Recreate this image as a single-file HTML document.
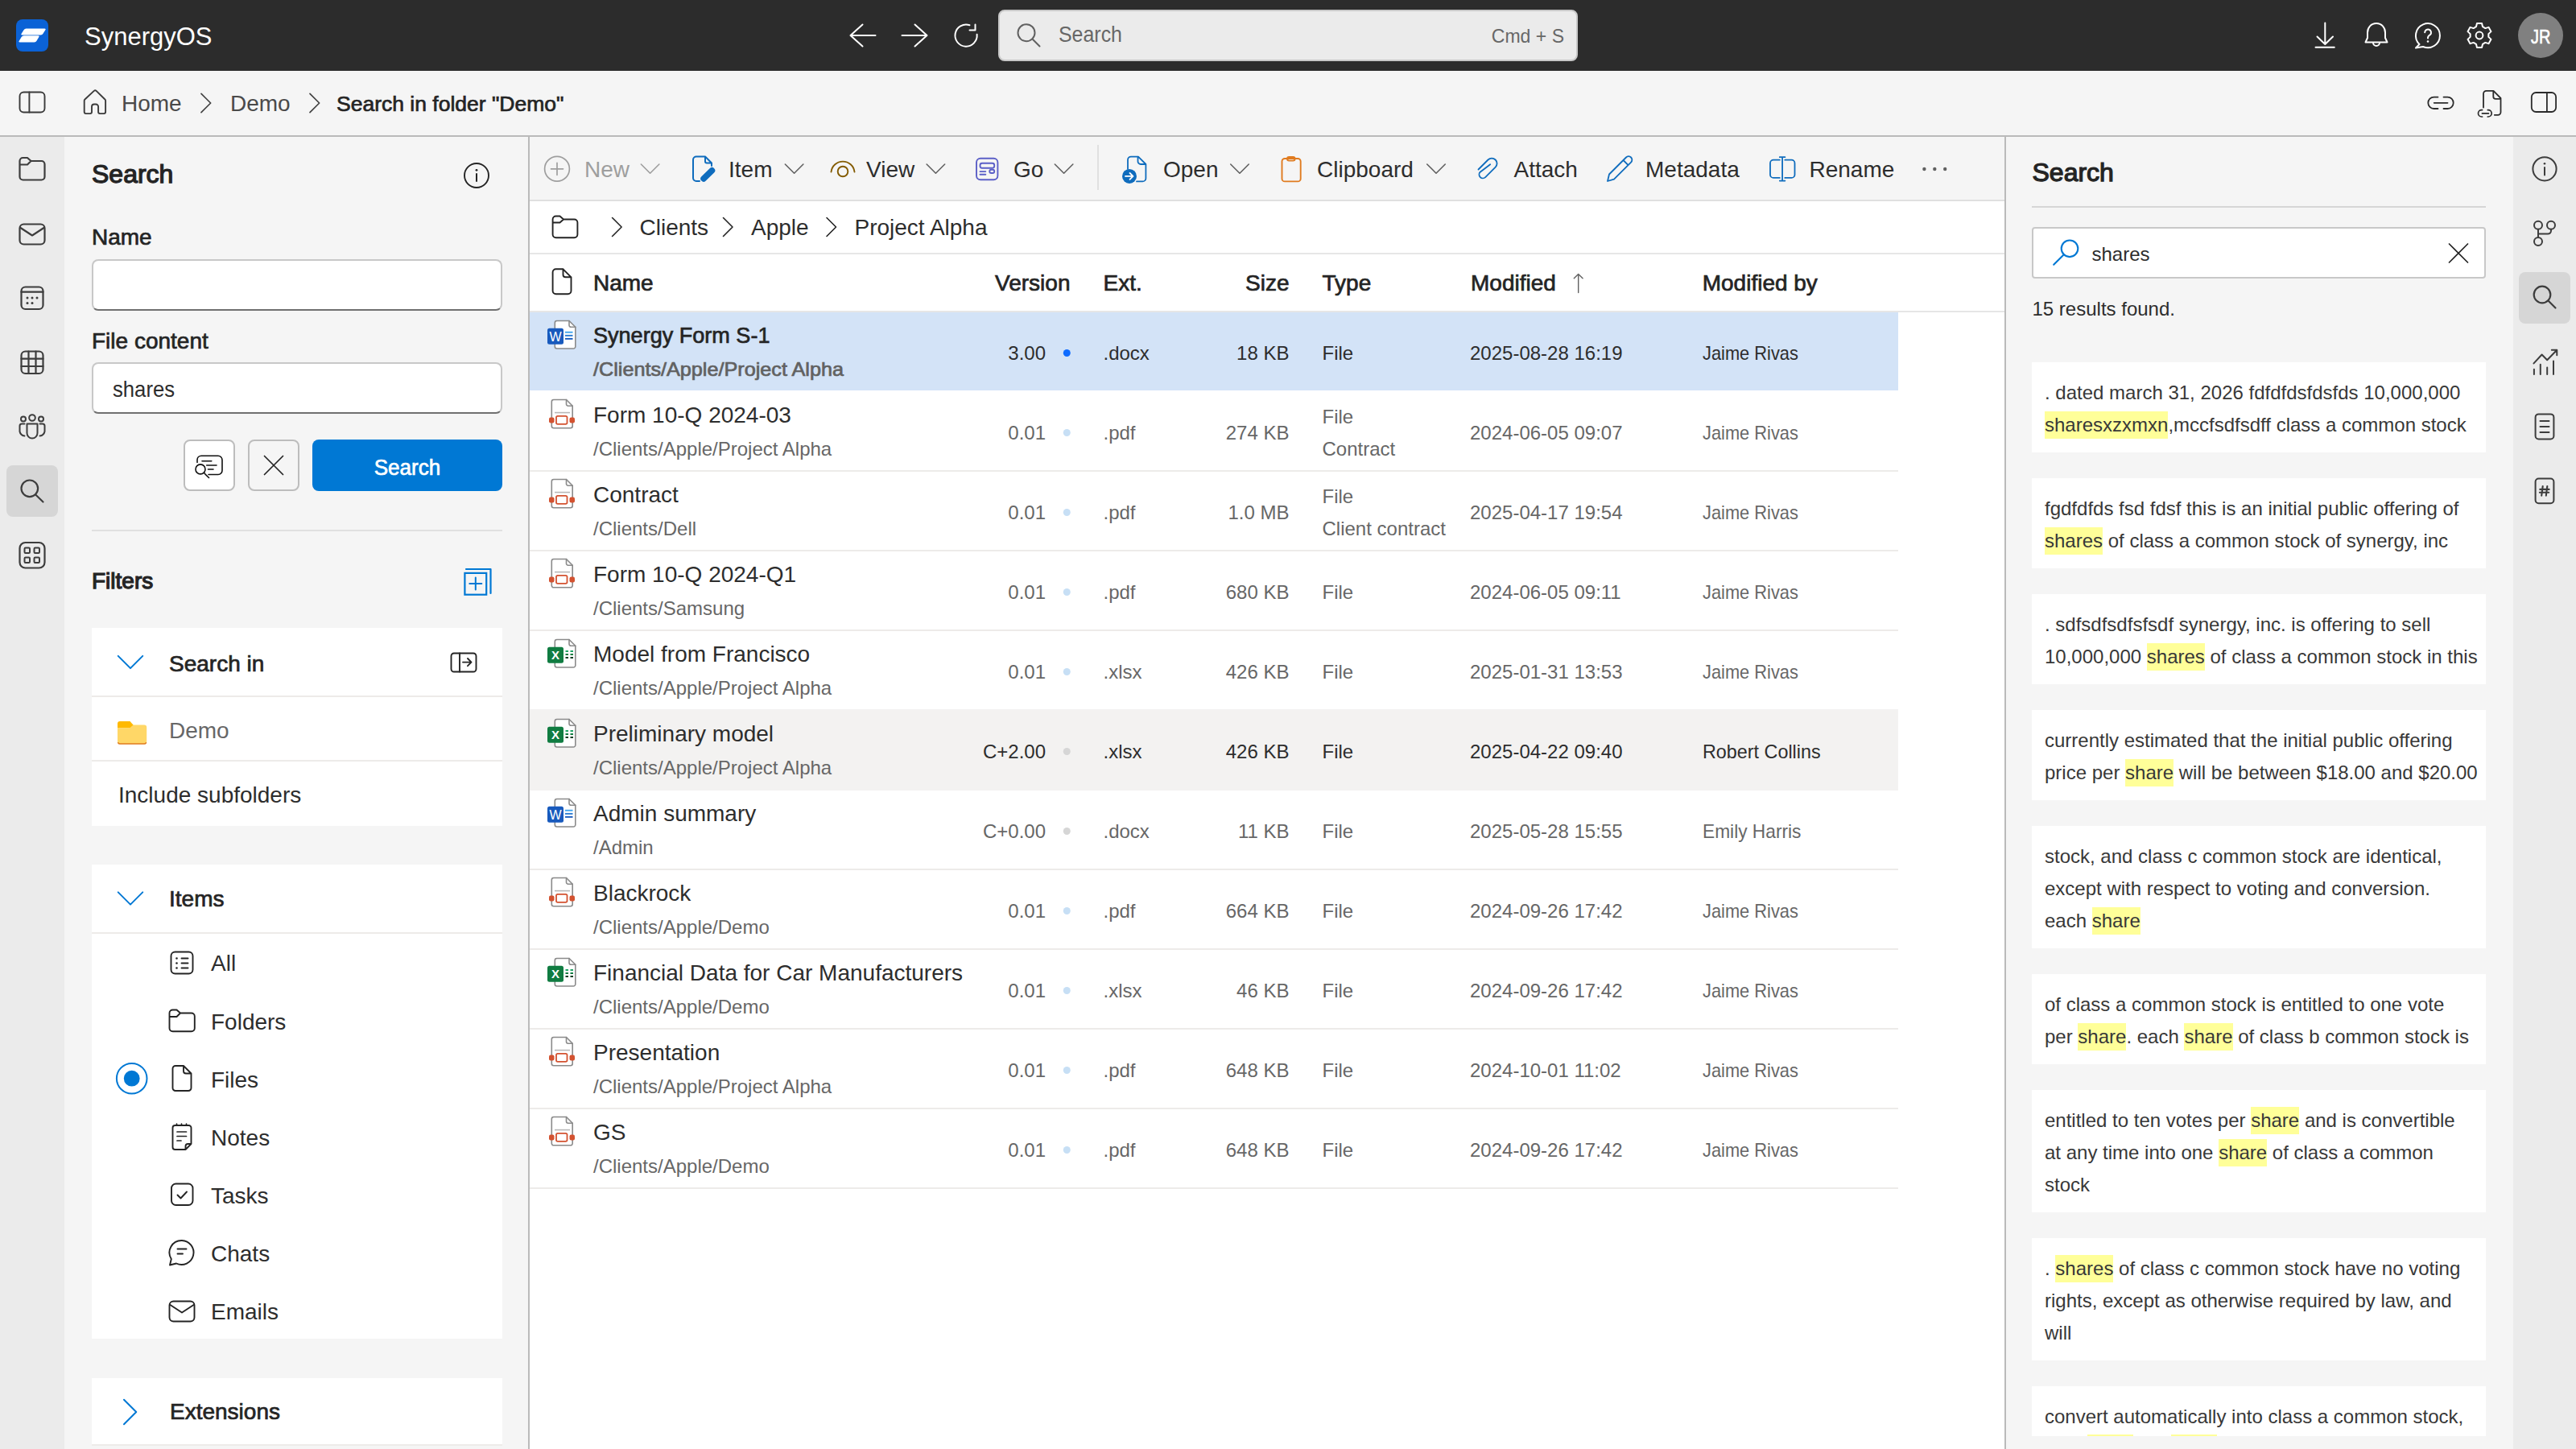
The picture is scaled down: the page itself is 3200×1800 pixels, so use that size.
<!DOCTYPE html>
<html><head><meta charset="utf-8"><title>SynergyOS</title>
<style>
*{box-sizing:border-box;margin:0;padding:0}
html,body{width:3200px;height:1800px;overflow:hidden;background:#fff;font-family:"Liberation Sans",sans-serif;color:#242424}
.a{position:absolute}
.t{position:absolute;white-space:nowrap;line-height:1}
.hl{background:#ffff99;padding:3px 0 4px}
</style></head><body>
<div class="a" style="left:0px;top:0px;width:3200px;height:88px;background:#2c2c2c;"></div>
<div class="a" style="left:20px;top:24px;width:40px;height:40px;background:#0b62d6;border-radius:8px"></div>
<div class="t" style="left:105px;top:30.25px;font-size:31px;color:#fff;font-weight:400;">SynergyOS</div>
<div class="a" style="left:1240px;top:12px;width:720px;height:64px;background:#ebebeb;border:2px solid #c8c8c8;border-radius:8px"></div>
<div class="t" style="left:1315px;top:29.29px;font-size:28px;color:#676767;font-weight:400;transform:scaleX(0.89);transform-origin:left center;">Search</div>
<div class="t" style="right:1256.5px;top:32.68px;font-size:24px;color:#676767;font-weight:400;text-align:right;transform:scaleX(0.96);transform-origin:right center;">Cmd + S</div>
<div class="a" style="left:3128px;top:16px;width:56px;height:56px;background:#808080;border-radius:50%"></div>
<div class="t" style="left:3143.5px;top:33.68px;font-size:24px;color:#fff;font-weight:400;-webkit-text-stroke:0.7px #fff;transform:scaleX(0.83);transform-origin:left center;">JR</div>
<div class="a" style="left:0px;top:88px;width:3200px;height:80px;background:#f5f5f5;"></div>
<div class="a" style="left:0px;top:168px;width:3200px;height:2px;background:#bababa;"></div>
<div class="t" style="left:151px;top:115.09px;font-size:28px;color:#4a4a4a;font-weight:400;">Home</div>
<div class="t" style="left:286px;top:115.09px;font-size:28px;color:#4a4a4a;font-weight:400;">Demo</div>
<div class="t" style="left:418px;top:116.36px;font-size:26.5px;color:#242424;font-weight:400;-webkit-text-stroke:0.7px #242424;">Search in folder "Demo"</div>
<div class="a" style="left:0px;top:170px;width:80px;height:1630px;background:#ebebeb;"></div>
<div class="a" style="left:80px;top:170px;width:576px;height:1630px;background:#f5f5f5;"></div>
<div class="a" style="left:656px;top:170px;width:2px;height:1630px;background:#bababa;"></div>
<div class="a" style="left:658px;top:170px;width:1832px;height:1630px;background:#ffffff;"></div>
<div class="a" style="left:2490px;top:170px;width:2px;height:1630px;background:#bababa;"></div>
<div class="a" style="left:2492px;top:170px;width:630px;height:1630px;background:#f5f5f5;"></div>
<div class="a" style="left:3122px;top:170px;width:78px;height:1630px;background:#ebebeb;"></div>
<div class="a" style="left:8px;top:578px;width:64px;height:64px;background:#d6d6d6;border-radius:8px"></div>
<div class="a" style="left:3129px;top:338px;width:64px;height:64px;background:#d6d6d6;border-radius:8px"></div>
<div class="t" style="left:114px;top:200.41px;font-size:32px;color:#242424;font-weight:400;-webkit-text-stroke:1.25px #242424;">Search</div>
<div class="t" style="left:114px;top:281.49px;font-size:28px;color:#242424;font-weight:400;-webkit-text-stroke:0.7px #242424;">Name</div>
<div class="a" style="left:114px;top:322px;width:510px;height:64px;background:#fff;border:2px solid #c8c8c8;border-bottom-color:#707070;border-radius:8px"></div>
<div class="t" style="left:114px;top:410.29px;font-size:28px;color:#242424;font-weight:400;-webkit-text-stroke:0.7px #242424;">File content</div>
<div class="a" style="left:114px;top:450px;width:510px;height:64px;background:#fff;border:2px solid #c8c8c8;border-bottom-color:#707070;border-radius:8px"></div>
<div class="t" style="left:140px;top:469.59px;font-size:28px;color:#2d2d2d;font-weight:400;transform:scaleX(0.917);transform-origin:left center;">shares</div>
<div class="a" style="left:228px;top:546px;width:64px;height:64px;background:#fff;border:2px solid #bdbdbd;border-radius:8px"></div>
<div class="a" style="left:308px;top:546px;width:64px;height:64px;background:#f5f5f5;border:2px solid #bdbdbd;border-radius:8px"></div>
<div class="a" style="left:388px;top:546px;width:236px;height:64px;background:#0078d4;border-radius:8px"></div>
<div class="t" style="left:388px;width:236px;top:566.89px;text-align:center;font-size:28px;font-weight:400;-webkit-text-stroke:0.7px #fff;color:#fff;transform:scaleX(0.93)">Search</div>
<div class="a" style="left:114px;top:658px;width:510px;height:2px;background:#e0e0e0;"></div>
<div class="t" style="left:114px;top:707.69px;font-size:28px;color:#242424;font-weight:400;-webkit-text-stroke:1.25px #242424;">Filters</div>
<div class="a" style="left:114px;top:780px;width:510px;height:246px;background:#fff;"></div>
<div class="a" style="left:114px;top:864px;width:510px;height:2px;background:#edebe9;"></div>
<div class="a" style="left:114px;top:944px;width:510px;height:2px;background:#edebe9;"></div>
<div class="t" style="left:210px;top:810.69px;font-size:28px;color:#242424;font-weight:400;-webkit-text-stroke:0.7px #242424;">Search in</div>
<div class="t" style="left:210px;top:894.29px;font-size:28px;color:#676767;font-weight:400;">Demo</div>
<div class="t" style="left:147px;top:973.79px;font-size:28px;color:#2d2d2d;font-weight:400;">Include subfolders</div>
<div class="a" style="left:114px;top:1074px;width:510px;height:589px;background:#fff;"></div>
<div class="a" style="left:114px;top:1158px;width:510px;height:2px;background:#edebe9;"></div>
<div class="t" style="left:210px;top:1103.29px;font-size:28px;color:#242424;font-weight:400;-webkit-text-stroke:0.7px #242424;">Items</div>
<div class="t" style="left:262px;top:1183.29px;font-size:28px;color:#2d2d2d;font-weight:400;">All</div>
<div class="t" style="left:262px;top:1255.79px;font-size:28px;color:#2d2d2d;font-weight:400;">Folders</div>
<div class="t" style="left:262px;top:1328.09px;font-size:28px;color:#2d2d2d;font-weight:400;">Files</div>
<div class="t" style="left:262px;top:1400.29px;font-size:28px;color:#2d2d2d;font-weight:400;">Notes</div>
<div class="t" style="left:262px;top:1472.29px;font-size:28px;color:#2d2d2d;font-weight:400;">Tasks</div>
<div class="t" style="left:262px;top:1544.29px;font-size:28px;color:#2d2d2d;font-weight:400;">Chats</div>
<div class="t" style="left:262px;top:1616.29px;font-size:28px;color:#2d2d2d;font-weight:400;">Emails</div>
<div class="a" style="left:114px;top:1712px;width:510px;height:82px;background:#fff;"></div>
<div class="a" style="left:114px;top:1794px;width:510px;height:2px;background:#edebe9;"></div>
<div class="t" style="left:211px;top:1740.29px;font-size:28px;color:#242424;font-weight:400;-webkit-text-stroke:0.7px #242424;">Extensions</div>
<div class="a" style="left:658px;top:170px;width:1832px;height:78px;background:#f5f5f5;"></div>
<div class="a" style="left:658px;top:248px;width:1832px;height:2px;background:#e0e0e0;"></div>
<div class="a" style="left:658px;top:314px;width:1832px;height:2px;background:#e6e6e6;"></div>
<div class="a" style="left:658px;top:386px;width:1832px;height:2px;background:#e6e6e6;"></div>
<div class="t" style="left:726px;top:196.99px;font-size:28px;color:#9e9e9e;font-weight:400;">New</div>
<div class="t" style="left:905px;top:196.99px;font-size:28px;color:#2d2d2d;font-weight:400;">Item</div>
<div class="t" style="left:1076px;top:196.99px;font-size:28px;color:#2d2d2d;font-weight:400;">View</div>
<div class="t" style="left:1259px;top:196.99px;font-size:28px;color:#2d2d2d;font-weight:400;">Go</div>
<div class="a" style="left:1363px;top:180px;width:2px;height:56px;background:#e0e0e0;"></div>
<div class="t" style="left:1445px;top:197.19px;font-size:28px;color:#2d2d2d;font-weight:400;">Open</div>
<div class="t" style="left:1636px;top:197.19px;font-size:28px;color:#2d2d2d;font-weight:400;">Clipboard</div>
<div class="t" style="left:1880.5px;top:197.19px;font-size:28px;color:#2d2d2d;font-weight:400;">Attach</div>
<div class="t" style="left:2044px;top:197.19px;font-size:28px;color:#2d2d2d;font-weight:400;">Metadata</div>
<div class="t" style="left:2247.5px;top:197.19px;font-size:28px;color:#2d2d2d;font-weight:400;">Rename</div>
<div class="t" style="left:794.5px;top:269.29px;font-size:28px;color:#2d2d2d;font-weight:400;">Clients</div>
<div class="t" style="left:933px;top:269.29px;font-size:28px;color:#2d2d2d;font-weight:400;">Apple</div>
<div class="t" style="left:1061.5px;top:269.29px;font-size:28px;color:#2d2d2d;font-weight:400;">Project Alpha</div>
<div class="t" style="left:737px;top:338.19px;font-size:28px;color:#242424;font-weight:400;-webkit-text-stroke:0.7px #242424;">Name</div>
<div class="t" style="right:1870.5px;top:338.19px;font-size:28px;color:#242424;font-weight:400;text-align:right;-webkit-text-stroke:0.7px #242424;">Version</div>
<div class="t" style="left:1370.5px;top:338.19px;font-size:28px;color:#242424;font-weight:400;-webkit-text-stroke:0.7px #242424;">Ext.</div>
<div class="t" style="right:1598.5px;top:338.19px;font-size:28px;color:#242424;font-weight:400;text-align:right;-webkit-text-stroke:0.7px #242424;">Size</div>
<div class="t" style="left:1642.5px;top:338.19px;font-size:28px;color:#242424;font-weight:400;-webkit-text-stroke:0.7px #242424;">Type</div>
<div class="t" style="left:1827px;top:338.19px;font-size:28px;color:#242424;font-weight:400;-webkit-text-stroke:0.7px #242424;">Modified</div>
<div class="t" style="left:2114.7px;top:338.19px;font-size:28px;color:#242424;font-weight:400;-webkit-text-stroke:0.7px #242424;">Modified by</div>
<div class="a" style="left:658px;top:388px;width:1700px;height:97px;background:#d3e3f7;"></div>
<div class="t" style="left:737px;top:403.29px;font-size:28px;color:#242424;font-weight:400;-webkit-text-stroke:0.7px #242424;transform:scaleX(0.966);transform-origin:left center;">Synergy Form S-1</div>
<div class="t" style="left:737px;top:446.68px;font-size:24px;color:#616161;font-weight:400;-webkit-text-stroke:0.7px #616161;transform:scaleX(1.05);transform-origin:left center;">/Clients/Apple/Project Alpha</div>
<div class="t" style="right:1901px;top:426.68px;font-size:24px;color:#2d2d2d;font-weight:400;text-align:right;">3.00</div>
<div class="t" style="left:1370.5px;top:426.68px;font-size:24px;color:#2d2d2d;font-weight:400;">.docx</div>
<div class="t" style="right:1598.5px;top:426.68px;font-size:24px;color:#2d2d2d;font-weight:400;text-align:right;">18 KB</div>
<div class="t" style="left:1642.5px;top:426.68px;font-size:24px;color:#2d2d2d;font-weight:400;">File</div>
<div class="t" style="left:1826px;top:426.68px;font-size:24px;color:#2d2d2d;font-weight:400;">2025-08-28 16:19</div>
<div class="t" style="left:2114.5px;top:426.68px;font-size:24px;color:#2d2d2d;font-weight:400;transform:scaleX(0.91);transform-origin:left center;">Jaime Rivas</div>
<div class="a" style="left:658px;top:584px;width:1700px;height:2px;background:#edebe9;"></div>
<div class="t" style="left:737px;top:502.29px;font-size:28px;color:#2d2d2d;font-weight:400;">Form 10-Q 2024-03</div>
<div class="t" style="left:737px;top:545.68px;font-size:24px;color:#676767;font-weight:400;">/Clients/Apple/Project Alpha</div>
<div class="t" style="right:1901px;top:525.68px;font-size:24px;color:#676767;font-weight:400;text-align:right;">0.01</div>
<div class="t" style="left:1370.5px;top:525.68px;font-size:24px;color:#676767;font-weight:400;">.pdf</div>
<div class="t" style="right:1598.5px;top:525.68px;font-size:24px;color:#676767;font-weight:400;text-align:right;">274 KB</div>
<div class="t" style="left:1642.5px;top:505.68px;font-size:24px;color:#676767;font-weight:400;">File</div>
<div class="t" style="left:1642.5px;top:545.68px;font-size:24px;color:#676767;font-weight:400;">Contract</div>
<div class="t" style="left:1826px;top:525.68px;font-size:24px;color:#676767;font-weight:400;">2024-06-05 09:07</div>
<div class="t" style="left:2114.5px;top:525.68px;font-size:24px;color:#676767;font-weight:400;transform:scaleX(0.91);transform-origin:left center;">Jaime Rivas</div>
<div class="a" style="left:658px;top:683px;width:1700px;height:2px;background:#edebe9;"></div>
<div class="t" style="left:737px;top:601.29px;font-size:28px;color:#2d2d2d;font-weight:400;">Contract</div>
<div class="t" style="left:737px;top:644.68px;font-size:24px;color:#676767;font-weight:400;">/Clients/Dell</div>
<div class="t" style="right:1901px;top:624.68px;font-size:24px;color:#676767;font-weight:400;text-align:right;">0.01</div>
<div class="t" style="left:1370.5px;top:624.68px;font-size:24px;color:#676767;font-weight:400;">.pdf</div>
<div class="t" style="right:1598.5px;top:624.68px;font-size:24px;color:#676767;font-weight:400;text-align:right;">1.0 MB</div>
<div class="t" style="left:1642.5px;top:604.68px;font-size:24px;color:#676767;font-weight:400;">File</div>
<div class="t" style="left:1642.5px;top:644.68px;font-size:24px;color:#676767;font-weight:400;">Client contract</div>
<div class="t" style="left:1826px;top:624.68px;font-size:24px;color:#676767;font-weight:400;">2025-04-17 19:54</div>
<div class="t" style="left:2114.5px;top:624.68px;font-size:24px;color:#676767;font-weight:400;transform:scaleX(0.91);transform-origin:left center;">Jaime Rivas</div>
<div class="a" style="left:658px;top:782px;width:1700px;height:2px;background:#edebe9;"></div>
<div class="t" style="left:737px;top:700.29px;font-size:28px;color:#2d2d2d;font-weight:400;">Form 10-Q 2024-Q1</div>
<div class="t" style="left:737px;top:743.68px;font-size:24px;color:#676767;font-weight:400;">/Clients/Samsung</div>
<div class="t" style="right:1901px;top:723.68px;font-size:24px;color:#676767;font-weight:400;text-align:right;">0.01</div>
<div class="t" style="left:1370.5px;top:723.68px;font-size:24px;color:#676767;font-weight:400;">.pdf</div>
<div class="t" style="right:1598.5px;top:723.68px;font-size:24px;color:#676767;font-weight:400;text-align:right;">680 KB</div>
<div class="t" style="left:1642.5px;top:723.68px;font-size:24px;color:#676767;font-weight:400;">File</div>
<div class="t" style="left:1826px;top:723.68px;font-size:24px;color:#676767;font-weight:400;">2024-06-05 09:11</div>
<div class="t" style="left:2114.5px;top:723.68px;font-size:24px;color:#676767;font-weight:400;transform:scaleX(0.91);transform-origin:left center;">Jaime Rivas</div>
<div class="a" style="left:658px;top:881px;width:1700px;height:2px;background:#edebe9;"></div>
<div class="t" style="left:737px;top:799.29px;font-size:28px;color:#2d2d2d;font-weight:400;">Model from Francisco</div>
<div class="t" style="left:737px;top:842.68px;font-size:24px;color:#676767;font-weight:400;">/Clients/Apple/Project Alpha</div>
<div class="t" style="right:1901px;top:822.68px;font-size:24px;color:#676767;font-weight:400;text-align:right;">0.01</div>
<div class="t" style="left:1370.5px;top:822.68px;font-size:24px;color:#676767;font-weight:400;">.xlsx</div>
<div class="t" style="right:1598.5px;top:822.68px;font-size:24px;color:#676767;font-weight:400;text-align:right;">426 KB</div>
<div class="t" style="left:1642.5px;top:822.68px;font-size:24px;color:#676767;font-weight:400;">File</div>
<div class="t" style="left:1826px;top:822.68px;font-size:24px;color:#676767;font-weight:400;">2025-01-31 13:53</div>
<div class="t" style="left:2114.5px;top:822.68px;font-size:24px;color:#676767;font-weight:400;transform:scaleX(0.91);transform-origin:left center;">Jaime Rivas</div>
<div class="a" style="left:658px;top:881px;width:1700px;height:101px;background:#f3f2f1;"></div>
<div class="t" style="left:737px;top:898.29px;font-size:28px;color:#2d2d2d;font-weight:400;">Preliminary model</div>
<div class="t" style="left:737px;top:941.68px;font-size:24px;color:#676767;font-weight:400;">/Clients/Apple/Project Alpha</div>
<div class="t" style="right:1901px;top:921.68px;font-size:24px;color:#2d2d2d;font-weight:400;text-align:right;">C+2.00</div>
<div class="t" style="left:1370.5px;top:921.68px;font-size:24px;color:#2d2d2d;font-weight:400;">.xlsx</div>
<div class="t" style="right:1598.5px;top:921.68px;font-size:24px;color:#2d2d2d;font-weight:400;text-align:right;">426 KB</div>
<div class="t" style="left:1642.5px;top:921.68px;font-size:24px;color:#2d2d2d;font-weight:400;">File</div>
<div class="t" style="left:1826px;top:921.68px;font-size:24px;color:#2d2d2d;font-weight:400;">2025-04-22 09:40</div>
<div class="t" style="left:2114.5px;top:921.68px;font-size:24px;color:#2d2d2d;font-weight:400;transform:scaleX(0.973);transform-origin:left center;">Robert Collins</div>
<div class="a" style="left:658px;top:1079px;width:1700px;height:2px;background:#edebe9;"></div>
<div class="t" style="left:737px;top:997.29px;font-size:28px;color:#2d2d2d;font-weight:400;">Admin summary</div>
<div class="t" style="left:737px;top:1040.68px;font-size:24px;color:#676767;font-weight:400;">/Admin</div>
<div class="t" style="right:1901px;top:1020.68px;font-size:24px;color:#676767;font-weight:400;text-align:right;">C+0.00</div>
<div class="t" style="left:1370.5px;top:1020.68px;font-size:24px;color:#676767;font-weight:400;">.docx</div>
<div class="t" style="right:1598.5px;top:1020.68px;font-size:24px;color:#676767;font-weight:400;text-align:right;">11 KB</div>
<div class="t" style="left:1642.5px;top:1020.68px;font-size:24px;color:#676767;font-weight:400;">File</div>
<div class="t" style="left:1826px;top:1020.68px;font-size:24px;color:#676767;font-weight:400;">2025-05-28 15:55</div>
<div class="t" style="left:2114.5px;top:1020.68px;font-size:24px;color:#676767;font-weight:400;transform:scaleX(0.947);transform-origin:left center;">Emily Harris</div>
<div class="a" style="left:658px;top:1178px;width:1700px;height:2px;background:#edebe9;"></div>
<div class="t" style="left:737px;top:1096.29px;font-size:28px;color:#2d2d2d;font-weight:400;">Blackrock</div>
<div class="t" style="left:737px;top:1139.68px;font-size:24px;color:#676767;font-weight:400;">/Clients/Apple/Demo</div>
<div class="t" style="right:1901px;top:1119.68px;font-size:24px;color:#676767;font-weight:400;text-align:right;">0.01</div>
<div class="t" style="left:1370.5px;top:1119.68px;font-size:24px;color:#676767;font-weight:400;">.pdf</div>
<div class="t" style="right:1598.5px;top:1119.68px;font-size:24px;color:#676767;font-weight:400;text-align:right;">664 KB</div>
<div class="t" style="left:1642.5px;top:1119.68px;font-size:24px;color:#676767;font-weight:400;">File</div>
<div class="t" style="left:1826px;top:1119.68px;font-size:24px;color:#676767;font-weight:400;">2024-09-26 17:42</div>
<div class="t" style="left:2114.5px;top:1119.68px;font-size:24px;color:#676767;font-weight:400;transform:scaleX(0.91);transform-origin:left center;">Jaime Rivas</div>
<div class="a" style="left:658px;top:1277px;width:1700px;height:2px;background:#edebe9;"></div>
<div class="t" style="left:737px;top:1195.29px;font-size:28px;color:#2d2d2d;font-weight:400;">Financial Data for Car Manufacturers</div>
<div class="t" style="left:737px;top:1238.68px;font-size:24px;color:#676767;font-weight:400;">/Clients/Apple/Demo</div>
<div class="t" style="right:1901px;top:1218.68px;font-size:24px;color:#676767;font-weight:400;text-align:right;">0.01</div>
<div class="t" style="left:1370.5px;top:1218.68px;font-size:24px;color:#676767;font-weight:400;">.xlsx</div>
<div class="t" style="right:1598.5px;top:1218.68px;font-size:24px;color:#676767;font-weight:400;text-align:right;">46 KB</div>
<div class="t" style="left:1642.5px;top:1218.68px;font-size:24px;color:#676767;font-weight:400;">File</div>
<div class="t" style="left:1826px;top:1218.68px;font-size:24px;color:#676767;font-weight:400;">2024-09-26 17:42</div>
<div class="t" style="left:2114.5px;top:1218.68px;font-size:24px;color:#676767;font-weight:400;transform:scaleX(0.91);transform-origin:left center;">Jaime Rivas</div>
<div class="a" style="left:658px;top:1376px;width:1700px;height:2px;background:#edebe9;"></div>
<div class="t" style="left:737px;top:1294.29px;font-size:28px;color:#2d2d2d;font-weight:400;">Presentation</div>
<div class="t" style="left:737px;top:1337.68px;font-size:24px;color:#676767;font-weight:400;">/Clients/Apple/Project Alpha</div>
<div class="t" style="right:1901px;top:1317.68px;font-size:24px;color:#676767;font-weight:400;text-align:right;">0.01</div>
<div class="t" style="left:1370.5px;top:1317.68px;font-size:24px;color:#676767;font-weight:400;">.pdf</div>
<div class="t" style="right:1598.5px;top:1317.68px;font-size:24px;color:#676767;font-weight:400;text-align:right;">648 KB</div>
<div class="t" style="left:1642.5px;top:1317.68px;font-size:24px;color:#676767;font-weight:400;">File</div>
<div class="t" style="left:1826px;top:1317.68px;font-size:24px;color:#676767;font-weight:400;">2024-10-01 11:02</div>
<div class="t" style="left:2114.5px;top:1317.68px;font-size:24px;color:#676767;font-weight:400;transform:scaleX(0.91);transform-origin:left center;">Jaime Rivas</div>
<div class="a" style="left:658px;top:1475px;width:1700px;height:2px;background:#edebe9;"></div>
<div class="t" style="left:737px;top:1393.29px;font-size:28px;color:#2d2d2d;font-weight:400;">GS</div>
<div class="t" style="left:737px;top:1436.68px;font-size:24px;color:#676767;font-weight:400;">/Clients/Apple/Demo</div>
<div class="t" style="right:1901px;top:1416.68px;font-size:24px;color:#676767;font-weight:400;text-align:right;">0.01</div>
<div class="t" style="left:1370.5px;top:1416.68px;font-size:24px;color:#676767;font-weight:400;">.pdf</div>
<div class="t" style="right:1598.5px;top:1416.68px;font-size:24px;color:#676767;font-weight:400;text-align:right;">648 KB</div>
<div class="t" style="left:1642.5px;top:1416.68px;font-size:24px;color:#676767;font-weight:400;">File</div>
<div class="t" style="left:1826px;top:1416.68px;font-size:24px;color:#676767;font-weight:400;">2024-09-26 17:42</div>
<div class="t" style="left:2114.5px;top:1416.68px;font-size:24px;color:#676767;font-weight:400;transform:scaleX(0.91);transform-origin:left center;">Jaime Rivas</div>
<div class="t" style="left:2524.5px;top:198.21px;font-size:32px;color:#242424;font-weight:400;-webkit-text-stroke:1.25px #242424;">Search</div>
<div class="a" style="left:2524px;top:256px;width:564px;height:2px;background:#d6d6d6;"></div>
<div class="a" style="left:2524px;top:282px;width:564px;height:64px;background:#fff;border:2px solid #c8c8c8;border-radius:4px"></div>
<div class="t" style="left:2598.5px;top:303.68px;font-size:24px;color:#2d2d2d;font-weight:400;">shares</div>
<div class="t" style="left:2524.5px;top:371.98px;font-size:24px;color:#2d2d2d;font-weight:400;">15 results found.</div>
<div class="a" style="left:2492px;top:420px;width:630px;height:1364px;overflow:hidden">
<div class="a" style="left:32px;top:30px;width:564px;height:112px;background:#fff;"></div>
<div class="t" style="left:48px;top:55.68px;font-size:24px;color:#383838;font-weight:400;">. dated march 31, 2026 fdfdfdsfdsfds 10,000,000</div>
<div class="t" style="left:48px;top:95.68px;font-size:24px;color:#383838;font-weight:400;"><span class="hl">sharesxzxmxn</span>,mccfsdfsdff class a common stock</div>
<div class="a" style="left:32px;top:174px;width:564px;height:112px;background:#fff;"></div>
<div class="t" style="left:48px;top:199.68px;font-size:24px;color:#383838;font-weight:400;">fgdfdfds fsd fdsf this is an initial public offering of</div>
<div class="t" style="left:48px;top:239.68px;font-size:24px;color:#383838;font-weight:400;"><span class="hl">shares</span> of class a common stock of synergy, inc</div>
<div class="a" style="left:32px;top:318px;width:564px;height:112px;background:#fff;"></div>
<div class="t" style="left:48px;top:343.68px;font-size:24px;color:#383838;font-weight:400;">. sdfsdfsdfsfsdf synergy, inc. is offering to sell</div>
<div class="t" style="left:48px;top:383.68px;font-size:24px;color:#383838;font-weight:400;">10,000,000 <span class="hl">shares</span> of class a common stock in this</div>
<div class="a" style="left:32px;top:462px;width:564px;height:112px;background:#fff;"></div>
<div class="t" style="left:48px;top:487.68px;font-size:24px;color:#383838;font-weight:400;">currently estimated that the initial public offering</div>
<div class="t" style="left:48px;top:527.68px;font-size:24px;color:#383838;font-weight:400;">price per <span class="hl">share</span> will be between $18.00 and $20.00</div>
<div class="a" style="left:32px;top:606px;width:564px;height:152px;background:#fff;"></div>
<div class="t" style="left:48px;top:631.68px;font-size:24px;color:#383838;font-weight:400;">stock, and class c common stock are identical,</div>
<div class="t" style="left:48px;top:671.68px;font-size:24px;color:#383838;font-weight:400;">except with respect to voting and conversion.</div>
<div class="t" style="left:48px;top:711.68px;font-size:24px;color:#383838;font-weight:400;">each <span class="hl">share</span></div>
<div class="a" style="left:32px;top:790px;width:564px;height:112px;background:#fff;"></div>
<div class="t" style="left:48px;top:815.68px;font-size:24px;color:#383838;font-weight:400;">of class a common stock is entitled to one vote</div>
<div class="t" style="left:48px;top:855.68px;font-size:24px;color:#383838;font-weight:400;">per <span class="hl">share</span>. each <span class="hl">share</span> of class b common stock is</div>
<div class="a" style="left:32px;top:934px;width:564px;height:152px;background:#fff;"></div>
<div class="t" style="left:48px;top:959.68px;font-size:24px;color:#383838;font-weight:400;">entitled to ten votes per <span class="hl">share</span> and is convertible</div>
<div class="t" style="left:48px;top:999.68px;font-size:24px;color:#383838;font-weight:400;">at any time into one <span class="hl">share</span> of class a common</div>
<div class="t" style="left:48px;top:1039.68px;font-size:24px;color:#383838;font-weight:400;">stock</div>
<div class="a" style="left:32px;top:1118px;width:564px;height:152px;background:#fff;"></div>
<div class="t" style="left:48px;top:1143.68px;font-size:24px;color:#383838;font-weight:400;">. <span class="hl">shares</span> of class c common stock have no voting</div>
<div class="t" style="left:48px;top:1183.68px;font-size:24px;color:#383838;font-weight:400;">rights, except as otherwise required by law, and</div>
<div class="t" style="left:48px;top:1223.68px;font-size:24px;color:#383838;font-weight:400;">will</div>
<div class="a" style="left:32px;top:1302px;width:564px;height:72px;background:#fff;"></div>
<div class="t" style="left:48px;top:1327.68px;font-size:24px;color:#383838;font-weight:400;">convert automatically into class a common stock,</div>
<div class="a" style="left:101px;top:1362px;width:57px;height:4px;background:#ffff99;"></div>
<div class="a" style="left:205px;top:1362px;width:57px;height:4px;background:#ffff99;"></div>
</div>
<svg class="a" style="left:0;top:0" width="3200" height="1800" viewBox="0 0 3200 1800">
<path d="M32.5 35.4 H55.5 Q57.5 35.4 56.3 37.2 L53.5 41.8 Q52.6 43.5 50.5 43.5 H27.5 Q25.5 43.5 26.7 41.8 L29.5 37.2 Q30.6 35.4 32.5 35.4Z" fill="#fff"/>
<path d="M31.8 44.3 H47.5 Q49.5 44.3 48.3 46.1 L45.5 50.7 Q44.6 52.4 42.6 52.4 H24.6 Q22.6 52.4 23.8 50.7 L26.6 46.1 Q27.7 44.3 29.8 44.3Z" fill="#fff"/>
<path d="M1087.5 44 H1056.5 M1071.5 30.5 L1056.5 44 L1071.5 57.5" fill="none" stroke="#fff" stroke-width="2" stroke-linecap="round" stroke-linejoin="round" />
<path d="M1120.5 44 H1151.5 M1136.5 30.5 L1151.5 44 L1136.5 57.5" fill="none" stroke="#fff" stroke-width="2" stroke-linecap="round" stroke-linejoin="round" />
<path d="M1213.6 42.7 A13.6 13.6 0 1 1 1204.5 31.2" fill="none" stroke="#fff" stroke-width="2" stroke-linecap="round" stroke-linejoin="round" />
<path d="M1211.5 30.5 V37.5 H1204.5" fill="none" stroke="#fff" stroke-width="2" stroke-linecap="round" stroke-linejoin="round" />
<circle cx="1275" cy="40.7" r="10.5" fill="none" stroke="#616161" stroke-width="2"/>
<path d="M1282.5 48.5 L1291.5 57.5" fill="none" stroke="#616161" stroke-width="2" stroke-linecap="round" stroke-linejoin="round" />
<path d="M2888.3 28.5 V55 M2878.5 45.5 L2888.3 55 L2898 45.5 M2876.5 58.8 H2899.8" fill="none" stroke="#fff" stroke-width="2" stroke-linecap="round" stroke-linejoin="round" />
<path d="M2952 29 C2945.5 29 2941 34 2941 40.5 V47 L2938.5 52.5 H2965.5 L2963 47 V40.5 C2963 34 2958.5 29 2952 29 Z" fill="none" stroke="#fff" stroke-width="2" stroke-linecap="round" stroke-linejoin="round" />
<path d="M2948 53 A4 4 0 0 0 2956 53" fill="none" stroke="#fff" stroke-width="2" stroke-linecap="round" stroke-linejoin="round" />
<path d="M3005.5 55 A15 15 0 1 1 3010 58 L3001 59.5 Z" fill="none" stroke="#fff" stroke-width="2" stroke-linecap="round" stroke-linejoin="round" />
<path d="M3012.2 40.3 A3.9 3.9 0 1 1 3019 43 Q3016 44.8 3016 47 V47.6" fill="none" stroke="#fff" stroke-width="2" stroke-linecap="round" stroke-linejoin="round" />
<circle cx="3016" cy="51.5" r="1.3" fill="#fff" stroke="none" stroke-width="0"/>
<path d="M3075.95 33.24 L3076.96 29.00 L3083.04 29.00 L3084.05 33.24 L3087.30 35.11 L3091.47 33.87 L3094.51 39.13 L3091.35 42.13 L3091.35 45.87 L3094.51 48.87 L3091.47 54.13 L3087.30 52.89 L3084.05 54.76 L3083.04 59.00 L3076.96 59.00 L3075.95 54.76 L3072.70 52.89 L3068.53 54.13 L3065.49 48.87 L3068.65 45.87 L3068.65 42.13 L3065.49 39.13 L3068.53 33.87 L3072.70 35.11Z" fill="none" stroke="#fff" stroke-width="2" stroke-linecap="round" stroke-linejoin="round" />
<circle cx="3080" cy="44" r="4.4" fill="none" stroke="#fff" stroke-width="2"/>
<rect x="24.5" y="114.5" width="31" height="25" rx="5" fill="none" stroke="#3b3b3b" stroke-width="1.9"/>
<path d="M36.4 114.5 V139.5" fill="none" stroke="#3b3b3b" stroke-width="1.9" stroke-linecap="round" stroke-linejoin="round" />
<path d="M104.7 125 A2 2 0 0 1 105.4 123.5 L116.8 112.9 A2 2 0 0 1 119.6 112.9 L130.4 123.5 A2 2 0 0 1 131.1 125 V139.1 A2 2 0 0 1 129.1 141.1 H124.1 A2 2 0 0 1 122.1 139.1 V132.5 A3 3 0 0 0 119.1 129.5 H117 A3 3 0 0 0 114 132.5 V139.1 A2 2 0 0 1 112 141.1 H106.7 A2 2 0 0 1 104.7 139.1 Z" fill="none" stroke="#3b3b3b" stroke-width="1.9" stroke-linecap="round" stroke-linejoin="round" />
<path d="M250 116.35 L261.65 128 L250 139.65" fill="none" stroke="#424242" stroke-width="1.7" stroke-linecap="round" stroke-linejoin="round" />
<path d="M385 116.35 L396.65 128 L385 139.65" fill="none" stroke="#424242" stroke-width="1.7" stroke-linecap="round" stroke-linejoin="round" />
<path d="M3028.5 120.6 H3023.5 A7.2 7.2 0 0 0 3023.5 135 H3028.5 M3035.5 120.6 H3040.5 A7.2 7.2 0 0 1 3040.5 135 H3035.5 M3023.7 127.8 H3040.5" fill="none" stroke="#2b2b2b" stroke-width="1.8" stroke-linecap="round" stroke-linejoin="round" />
<path d="M3085 133.5 V116.5 A3.6 3.6 0 0 1 3088.6 112.9 H3097.5 L3106.5 122 V139.2 A3.6 3.6 0 0 1 3102.9 142.8 H3098.8 M3097.3 113 V120 A2.9 2.9 0 0 0 3100.2 122.9 H3106.5" fill="none" stroke="#2b2b2b" stroke-width="1.8" stroke-linecap="round" stroke-linejoin="round" />
<path d="M3083.6 136.6 H3082.7 A4.2 4.2 0 0 0 3082.7 145 H3083.6 M3090.3 136.6 H3091 A4.2 4.2 0 0 1 3091 145 H3090.3 M3083.4 140.8 H3091.5" fill="none" stroke="#2b2b2b" stroke-width="1.7" stroke-linecap="round" stroke-linejoin="round" />
<rect x="3144.8" y="115" width="30.3" height="24" rx="5.5" fill="none" stroke="#2b2b2b" stroke-width="1.8"/>
<path d="M3163.9 115 V139" fill="none" stroke="#2b2b2b" stroke-width="1.8" stroke-linecap="round" stroke-linejoin="round" />
<path d="M24.5 200 A4 4 0 0 1 28.5 196 H34 L38.5 200 H51.5 A4 4 0 0 1 55.5 204 V219.5 A4 4 0 0 1 51.5 223.5 H28.5 A4 4 0 0 1 24.5 219.5 Z M24.5 204.5 H34 L38.5 200" fill="none" stroke="#3d3d3d" stroke-width="2.2" stroke-linecap="round" stroke-linejoin="round" />
<rect x="24.5" y="278.5" width="31" height="25" rx="5" fill="none" stroke="#3d3d3d" stroke-width="2.2"/>
<path d="M25.5 283 L40 292.5 L54.5 283" fill="none" stroke="#3d3d3d" stroke-width="2.2" stroke-linecap="round" stroke-linejoin="round" />
<rect x="26.5" y="356.5" width="27" height="27.5" rx="5" fill="none" stroke="#3d3d3d" stroke-width="2.2"/>
<path d="M26.5 362.7 H53.5" fill="none" stroke="#3d3d3d" stroke-width="2.2" stroke-linecap="round" stroke-linejoin="round" />
<circle cx="34" cy="370" r="1.5" fill="#3d3d3d" stroke="none" stroke-width="0"/>
<circle cx="40" cy="370" r="1.5" fill="#3d3d3d" stroke="none" stroke-width="0"/>
<circle cx="46" cy="370" r="1.5" fill="#3d3d3d" stroke="none" stroke-width="0"/>
<circle cx="34" cy="376.5" r="1.5" fill="#3d3d3d" stroke="none" stroke-width="0"/>
<circle cx="40" cy="376.5" r="1.5" fill="#3d3d3d" stroke="none" stroke-width="0"/>
<rect x="26.5" y="436.5" width="27" height="27.5" rx="5" fill="none" stroke="#3d3d3d" stroke-width="2.2"/>
<path d="M35.5 436.5 V464 M44.5 436.5 V464 M26.5 445.7 H53.5 M26.5 455 H53.5" fill="none" stroke="#3d3d3d" stroke-width="2.2" stroke-linecap="round" stroke-linejoin="round" />
<circle cx="40" cy="519" r="3.8" fill="none" stroke="#3d3d3d" stroke-width="2"/>
<circle cx="29" cy="520.5" r="3" fill="none" stroke="#3d3d3d" stroke-width="2"/>
<circle cx="51" cy="520.5" r="3" fill="none" stroke="#3d3d3d" stroke-width="2"/>
<path d="M33.5 526.5 H46.5 V538 A6.5 6.5 0 0 1 33.5 538 Z" fill="none" stroke="#3d3d3d" stroke-width="2" stroke-linecap="round" stroke-linejoin="round" />
<path d="M30.5 526.5 H27 A2.5 2.5 0 0 0 24.5 529 V536 A7 7 0 0 0 30.5 541.5 M49.5 526.5 H53 A2.5 2.5 0 0 1 55.5 529 V536 A7 7 0 0 1 49.5 541.5" fill="none" stroke="#3d3d3d" stroke-width="2" stroke-linecap="round" stroke-linejoin="round" />
<circle cx="36.8" cy="606.8" r="10.3" fill="none" stroke="#3d3d3d" stroke-width="2.2"/>
<path d="M44.2 614.5 L53.5 623.5" fill="none" stroke="#3d3d3d" stroke-width="2.2" stroke-linecap="round" stroke-linejoin="round" />
<rect x="24.5" y="674" width="31" height="31.5" rx="7" fill="none" stroke="#3d3d3d" stroke-width="2.2"/>
<rect x="30.5" y="680.5" width="6.5" height="6.5" rx="1.2" fill="none" stroke="#3d3d3d" stroke-width="2"/>
<rect x="42.5" y="680.5" width="6.5" height="6.5" rx="1.2" fill="none" stroke="#3d3d3d" stroke-width="2"/>
<rect x="30.5" y="692.5" width="6.5" height="6.5" rx="1.2" fill="none" stroke="#3d3d3d" stroke-width="2"/>
<rect x="42.5" y="692.5" width="6.5" height="6.5" rx="1.2" fill="none" stroke="#3d3d3d" stroke-width="2"/>
<circle cx="3161" cy="209.8" r="14.6" fill="none" stroke="#3d3d3d" stroke-width="2"/>
<circle cx="3161" cy="203.2" r="1.3" fill="#3d3d3d" stroke="none" stroke-width="0"/>
<path d="M3161 208 V217.5" fill="none" stroke="#3d3d3d" stroke-width="2" stroke-linecap="round" stroke-linejoin="round" />
<circle cx="3153" cy="279.7" r="5" fill="none" stroke="#3d3d3d" stroke-width="2"/>
<circle cx="3169" cy="279.7" r="5" fill="none" stroke="#3d3d3d" stroke-width="2"/>
<circle cx="3153" cy="300.1" r="5" fill="none" stroke="#3d3d3d" stroke-width="2"/>
<path d="M3153 284.7 V295.1 M3153 290.6 H3165 A4 4 0 0 0 3169 286.6 V284.7" fill="none" stroke="#3d3d3d" stroke-width="2" stroke-linecap="round" stroke-linejoin="round" />
<circle cx="3158" cy="366" r="10.3" fill="none" stroke="#3d3d3d" stroke-width="2.2"/>
<path d="M3165.5 373.5 L3174.5 382.5" fill="none" stroke="#3d3d3d" stroke-width="2.2" stroke-linecap="round" stroke-linejoin="round" />
<path d="M3147.5 451.4 L3157.6 440.5 L3164.2 447.3 L3176.3 434.7 M3169.8 434.7 H3176.3 V441.3" fill="none" stroke="#3d3d3d" stroke-width="2" stroke-linecap="round" stroke-linejoin="round" />
<path d="M3147.9 458.7 V465 M3155.8 452.7 V465 M3164.2 456.4 V465 M3172 448.6 V465" fill="none" stroke="#3d3d3d" stroke-width="2" stroke-linecap="round" stroke-linejoin="round" />
<rect x="3149.6" y="514.4" width="22.8" height="31" rx="4" fill="none" stroke="#3d3d3d" stroke-width="2"/>
<path d="M3155.5 523 H3166.5 M3155.5 530 H3166.5 M3155.5 537 H3166.5" fill="none" stroke="#3d3d3d" stroke-width="2" stroke-linecap="round" stroke-linejoin="round" />
<rect x="3149.6" y="594.6" width="22.8" height="30.7" rx="4" fill="none" stroke="#3d3d3d" stroke-width="2"/>
<path d="M3158.7 604 L3157.2 615.6 M3164.3 604 L3162.8 615.6 M3155.3 607.9 H3166.6 M3154.9 611.8 H3166.2" fill="none" stroke="#3d3d3d" stroke-width="2.1" stroke-linecap="round" stroke-linejoin="round" />
<circle cx="592" cy="218" r="15" fill="none" stroke="#242424" stroke-width="1.9"/>
<circle cx="592" cy="211.3" r="1.4" fill="#242424" stroke="none" stroke-width="0"/>
<path d="M592 216 V225" fill="none" stroke="#242424" stroke-width="2" stroke-linecap="round" stroke-linejoin="round" />
<path d="M245 574.5 V571 A5 5 0 0 1 250 566.3 H271 A5 5 0 0 1 276 571.3 V584.5 A5 5 0 0 1 271 589.5 H259" fill="none" stroke="#111" stroke-width="1.6" stroke-linecap="round" stroke-linejoin="round" />
<path d="M251 572.8 H262.8 M256.7 578 H269 M258.5 583 H265" fill="none" stroke="#111" stroke-width="1.6" stroke-linecap="round" stroke-linejoin="round" />
<circle cx="249" cy="582.9" r="6" fill="none" stroke="#111" stroke-width="1.6"/>
<path d="M253.5 587.5 L259.5 593.5" fill="none" stroke="#111" stroke-width="1.6" stroke-linecap="round" stroke-linejoin="round" />
<path d="M328.5 566.5 L351.5 589.5 M351.5 566.5 L328.5 589.5" fill="none" stroke="#242424" stroke-width="1.7" stroke-linecap="round" stroke-linejoin="round" />
<rect x="577.4" y="711.9" width="26.8" height="26.8" fill="none" stroke="#0078d4" stroke-width="2.2"/>
<path d="M579 707 H609.5 V737" fill="none" stroke="#0078d4" stroke-width="2.2" stroke-linecap="round" stroke-linejoin="round" stroke-linecap="butt" stroke-linejoin="miter"/>
<path d="M590.8 717.5 V732.5 M583.3 725 H598.3" fill="none" stroke="#0078d4" stroke-width="2" stroke-linecap="round" stroke-linejoin="round" />
<path d="M146.75 814.875 L162 830.125 L177.25 814.875" fill="none" stroke="#0078d4" stroke-width="2" stroke-linecap="round" stroke-linejoin="round" />
<rect x="560.5" y="811.5" width="31" height="23" rx="3.5" fill="none" stroke="#242424" stroke-width="1.9"/>
<path d="M571 811.5 V834.5 M575 822.6 H585.5 M581 818 L585.5 822.6 L581 827.2" fill="none" stroke="#242424" stroke-width="1.9" stroke-linecap="round" stroke-linejoin="round" />
<path d="M146 899 A3 3 0 0 1 149 896 H161.5 L165.5 900.5 V904.5 H146 Z" fill="#ffb900"/>
<path d="M146 904.5 H161 L165.5 900.5 H179.2 A3 3 0 0 1 182.2 903.5 V921 A3 3 0 0 1 179.2 924 H149 A3 3 0 0 1 146 921 Z" fill="#ffd767"/>
<path d="M146.8 922.8 Q147.5 924 149 924 H179.2 Q180.7 924 181.4 922.8" fill="none" stroke="#e07b1f" stroke-width="1.6" stroke-linecap="round" stroke-linejoin="round" />
<path d="M146.75 1108.375 L162 1123.625 L177.25 1108.375" fill="none" stroke="#0078d4" stroke-width="2" stroke-linecap="round" stroke-linejoin="round" />
<rect x="212.5" y="1182.5" width="27" height="27" rx="5" fill="none" stroke="#242424" stroke-width="1.9"/>
<circle cx="219.5" cy="1190.5" r="1.3" fill="#242424" stroke="none" stroke-width="0"/>
<path d="M225.5 1190.5 H233.5" fill="none" stroke="#242424" stroke-width="1.9" stroke-linecap="round" stroke-linejoin="round" />
<circle cx="219.5" cy="1196.5" r="1.3" fill="#242424" stroke="none" stroke-width="0"/>
<path d="M225.5 1196.5 H233.5" fill="none" stroke="#242424" stroke-width="1.9" stroke-linecap="round" stroke-linejoin="round" />
<circle cx="219.5" cy="1202.5" r="1.3" fill="#242424" stroke="none" stroke-width="0"/>
<path d="M225.5 1202.5 H233.5" fill="none" stroke="#242424" stroke-width="1.9" stroke-linecap="round" stroke-linejoin="round" />
<path d="M210.5 1258.5 A4 4 0 0 1 214.5 1254.5 H219.5 L224 1258.5 H237.8 A4 4 0 0 1 241.8 1262.5 V1277.3 A4 4 0 0 1 237.8 1281.3 H214.5 A4 4 0 0 1 210.5 1277.3 Z M210.5 1263 H219.5 L224 1258.5" fill="none" stroke="#242424" stroke-width="1.9" stroke-linecap="round" stroke-linejoin="round" />
<circle cx="163.7" cy="1339.7" r="18.8" fill="none" stroke="#0078d4" stroke-width="2"/>
<circle cx="163.7" cy="1339.7" r="9.9" fill="#0078d4" stroke="none" stroke-width="0"/>
<path d="M214.5 1327.5 A3.5 3.5 0 0 1 218 1324 H228 L237.5 1333.5 V1351.5 A3.5 3.5 0 0 1 234 1355 H218 A3.5 3.5 0 0 1 214.5 1351.5 Z M228 1324 V1330.5 A3 3 0 0 0 231 1333.5 H237.5" fill="none" stroke="#242424" stroke-width="1.9" stroke-linecap="round" stroke-linejoin="round" />
<path d="M214.5 1401 A3 3 0 0 1 217.5 1398 H234.5 A3 3 0 0 1 237.5 1401 V1421 L230.5 1428 H217.5 A3 3 0 0 1 214.5 1425 Z M237.5 1421 H233.5 A3 3 0 0 0 230.5 1424 V1428" fill="none" stroke="#242424" stroke-width="1.9" stroke-linecap="round" stroke-linejoin="round" />
<path d="M219.5 1396 V1398 M225.5 1396 V1398 M231.5 1396 V1398 M220 1406 H231.5 M220 1411.5 H231.5 M220 1417 H225" fill="none" stroke="#242424" stroke-width="1.7" stroke-linecap="round" stroke-linejoin="round" />
<rect x="213" y="1470.5" width="26.5" height="26.5" rx="5.5" fill="none" stroke="#242424" stroke-width="1.9"/>
<path d="M220.5 1484.5 L224.5 1488.5 L232 1480.5" fill="none" stroke="#242424" stroke-width="1.9" stroke-linecap="round" stroke-linejoin="round" />
<path d="M226 1541 A15 15 0 1 1 219 1569.5 L211 1571.5 L212.8 1564 A15 15 0 0 1 226 1541 Z" fill="none" stroke="#242424" stroke-width="1.9" stroke-linecap="round" stroke-linejoin="round" />
<path d="M220.5 1551.5 H231.5 M220.5 1557.5 H227" fill="none" stroke="#242424" stroke-width="1.9" stroke-linecap="round" stroke-linejoin="round" />
<rect x="210.5" y="1616.5" width="31" height="25" rx="5" fill="none" stroke="#242424" stroke-width="1.9"/>
<path d="M211.5 1621 L226 1630.5 L240.5 1621" fill="none" stroke="#242424" stroke-width="1.9" stroke-linecap="round" stroke-linejoin="round" />
<path d="M154 1738.75 L169.25 1754 L154 1769.25" fill="none" stroke="#0078d4" stroke-width="2" stroke-linecap="round" stroke-linejoin="round" />
<circle cx="692" cy="209.8" r="15.4" fill="none" stroke="#9e9e9e" stroke-width="1.7"/>
<path d="M692 202.3 V217.3 M684.5 209.8 H699.5" fill="none" stroke="#9e9e9e" stroke-width="1.7" stroke-linecap="round" stroke-linejoin="round" />
<path d="M796.35 203.975 L807.6 215.225 L818.85 203.975" fill="none" stroke="#9e9e9e" stroke-width="1.6" stroke-linecap="round" stroke-linejoin="round" />
<path d="M869 225 H865 A4 4 0 0 1 861 221 V198.5 A4 4 0 0 1 865 194.5 H876 L884 202.5 V206 M876 194.5 V200.5 A2 2 0 0 0 878 202.5 H884" fill="none" stroke="#0f6cbd" stroke-width="2" stroke-linecap="round" stroke-linejoin="round" />
<path d="M874 222 L884.5 211.8" fill="none" stroke="#0f6cbd" stroke-width="7.5" stroke-linecap="round" stroke-linejoin="round" />
<path d="M975.35 203.975 L986.6 215.225 L997.85 203.975" fill="none" stroke="#616161" stroke-width="1.6" stroke-linecap="round" stroke-linejoin="round" />
<path d="M1032.5 213.5 A14.6 14.6 0 0 1 1061.5 213.5" fill="none" stroke="#835b00" stroke-width="1.9" stroke-linecap="round" stroke-linejoin="round" />
<circle cx="1047" cy="213" r="6.3" fill="none" stroke="#835b00" stroke-width="1.9"/>
<path d="M1151.15 203.975 L1162.4 215.225 L1173.65 203.975" fill="none" stroke="#616161" stroke-width="1.6" stroke-linecap="round" stroke-linejoin="round" />
<rect x="1213" y="196.8" width="26.4" height="26.5" rx="5" fill="none" stroke="#5b5fc7" stroke-width="1.9"/>
<rect x="1217.5" y="202.8" width="17.7" height="6" rx="2.5" fill="none" stroke="#5b5fc7" stroke-width="1.9"/>
<path d="M1217.5 213.1 H1224.3 M1217.5 216.8 H1224.3" fill="none" stroke="#5b5fc7" stroke-width="1.9" stroke-linecap="round" stroke-linejoin="round" />
<rect x="1229.3" y="210.8" width="5.9" height="4.2" rx="2" fill="none" stroke="#5b5fc7" stroke-width="1.9"/>
<path d="M1310.35 203.975 L1321.6 215.225 L1332.85 203.975" fill="none" stroke="#616161" stroke-width="1.6" stroke-linecap="round" stroke-linejoin="round" />
<path d="M1401 210 V198.5 A4 4 0 0 1 1405 194.6 H1414 L1423.4 204 V221.4 A4 4 0 0 1 1419.4 225.4 H1412 M1413.5 194.6 V200.5 A3.5 3.5 0 0 0 1417 204 H1423.4" fill="none" stroke="#0f6cbd" stroke-width="1.8" stroke-linecap="round" stroke-linejoin="round" />
<circle cx="1403" cy="218.9" r="9" fill="#0f6cbd" stroke="none" stroke-width="0"/>
<path d="M1398 218.9 H1407.5 M1403.5 215 L1407.5 218.9 L1403.5 222.8" fill="none" stroke="#fff" stroke-width="1.8" stroke-linecap="round" stroke-linejoin="round" />
<path d="M1528.75 203.975 L1540 215.225 L1551.25 203.975" fill="none" stroke="#616161" stroke-width="1.6" stroke-linecap="round" stroke-linejoin="round" />
<rect x="1592.5" y="197" width="23.2" height="28.4" rx="3.5" fill="none" stroke="#e07b1f" stroke-width="1.9"/>
<rect x="1599" y="195" width="9.6" height="4.6" rx="2.3" fill="none" stroke="#e07b1f" stroke-width="1.9"/>
<path d="M1772.75 203.975 L1784 215.225 L1795.25 203.975" fill="none" stroke="#616161" stroke-width="1.6" stroke-linecap="round" stroke-linejoin="round" />
<path d="M1836.5 210.5 L1848.5 198.5 A6.5 6.5 0 0 1 1857.7 207.7 L1845.2 220.2 A4.6 4.6 0 0 1 1838.7 213.7 L1851.2 204.2" fill="none" stroke="#0f6cbd" stroke-width="1.8" stroke-linecap="round" stroke-linejoin="round" />
<path d="M1997 225 L1999 216.5 L2020 195.5 A4.3 4.3 0 0 1 2026.1 201.6 L2005 222.7 Z M2016.5 199 L2022.6 205.1" fill="none" stroke="#0f6cbd" stroke-width="1.8" stroke-linecap="round" stroke-linejoin="round" />
<path d="M2210.8 198.7 H2203 A4 4 0 0 0 2199 202.7 V216.9 A4 4 0 0 0 2203 220.9 H2210.8 M2217.3 198.7 H2225.5 A4 4 0 0 1 2229.5 202.7 V216.9 A4 4 0 0 1 2225.5 220.9 H2217.3 M2214.1 195.2 V224.6 M2210.8 195.2 H2217.4 M2210.8 224.6 H2217.4" fill="none" stroke="#0f6cbd" stroke-width="1.8" stroke-linecap="round" stroke-linejoin="round" />
<circle cx="2390.4" cy="210" r="2.2" fill="#616161" stroke="none" stroke-width="0"/>
<circle cx="2403.3" cy="210" r="2.2" fill="#616161" stroke="none" stroke-width="0"/>
<circle cx="2416.2" cy="210" r="2.2" fill="#616161" stroke="none" stroke-width="0"/>
<path d="M686.6 272.5 A4 4 0 0 1 690.6 268.5 H695.5 L700 272.5 H713.4 A4 4 0 0 1 717.4 276.5 V291.3 A4 4 0 0 1 713.4 295.3 H690.6 A4 4 0 0 1 686.6 291.3 Z M686.6 276.5 H695.5 L700 272.5" fill="none" stroke="#242424" stroke-width="1.9" stroke-linecap="round" stroke-linejoin="round" />
<path d="M760.6 270.5 L772.1 282 L760.6 293.5" fill="none" stroke="#242424" stroke-width="1.6" stroke-linecap="round" stroke-linejoin="round" />
<path d="M898.5 270.5 L910.0 282 L898.5 293.5" fill="none" stroke="#242424" stroke-width="1.6" stroke-linecap="round" stroke-linejoin="round" />
<path d="M1027 270.5 L1038.5 282 L1027 293.5" fill="none" stroke="#242424" stroke-width="1.6" stroke-linecap="round" stroke-linejoin="round" />
<path d="M686.6 338.3 A4 4 0 0 1 690.6 334.3 H699.5 L709.5 344.3 V361.3 A4 4 0 0 1 705.5 365.3 H690.6 A4 4 0 0 1 686.6 361.3 Z M699.5 334.3 V341.3 A3 3 0 0 0 702.5 344.3 H709.5" fill="none" stroke="#242424" stroke-width="1.9" stroke-linecap="round" stroke-linejoin="round" />
<path d="M1960.7 340.5 V363.5 M1955.3 345.8 L1960.7 340.4 L1966.1 345.8" fill="none" stroke="#616161" stroke-width="1.4" stroke-linecap="round" stroke-linejoin="round" />
<path d="M689.3 401 A2.5 2.5 0 0 1 691.8 398.5 H707 L714.8 406.3 V430.5 A2.5 2.5 0 0 1 712.3 433 H691.8 A2.5 2.5 0 0 1 689.3 430.5 Z" fill="#fff" stroke="#8a8a8a" stroke-width="1.6" stroke-linecap="round" stroke-linejoin="round" />
<path d="M707 398.5 V404 A2.3 2.3 0 0 0 709.3 406.3 H714.8" fill="none" stroke="#8a8a8a" stroke-width="1.6" stroke-linecap="round" stroke-linejoin="round" />
<rect x="702" y="411.8" width="9.5" height="1.9" rx="0" fill="#41a5ee"/>
<rect x="702" y="415.90000000000003" width="9.5" height="1.9" rx="0" fill="#2b7cd3"/>
<rect x="702" y="419.90000000000003" width="9.5" height="1.9" rx="0" fill="#185abd"/>
<rect x="680" y="407.8" width="20" height="20" rx="2.5" fill="#185abd"/>
<text x="690" y="423.5" font-family="Liberation Sans" font-size="16" font-weight="400" fill="#fff" text-anchor="middle">W</text>
<circle cx="1325.3" cy="438.5" r="4.5" fill="#0f6cff" stroke="none" stroke-width="0"/>
<path d="M685.3 499 A2.5 2.5 0 0 1 687.8 496.5 H703.5 L711.2 504.2 V529.3 A2.5 2.5 0 0 1 708.7 531.8 H687.8 A2.5 2.5 0 0 1 685.3 529.3 Z" fill="#fff" stroke="#8a8a8a" stroke-width="1.6" stroke-linecap="round" stroke-linejoin="round" />
<path d="M703.5 496.5 V502 A2.2 2.2 0 0 0 705.7 504.2 H711.2" fill="none" stroke="#8a8a8a" stroke-width="1.6" stroke-linecap="round" stroke-linejoin="round" />
<rect x="689" y="511.8" width="19" height="1.6" rx="0" fill="#b8b8b8"/>
<rect x="691" y="516.8" width="13.5" height="10" rx="1.8" fill="none" stroke="#d35230" stroke-width="1.8"/>
<rect x="682" y="518.4" width="6.5" height="7" rx="2" fill="#d35230"/>
<rect x="707.5" y="518.4" width="6.5" height="7" rx="2" fill="#d35230"/>
<circle cx="1325.3" cy="537.5" r="4.5" fill="#c7dff5" stroke="none" stroke-width="0"/>
<path d="M685.3 598 A2.5 2.5 0 0 1 687.8 595.5 H703.5 L711.2 603.2 V628.3 A2.5 2.5 0 0 1 708.7 630.8 H687.8 A2.5 2.5 0 0 1 685.3 628.3 Z" fill="#fff" stroke="#8a8a8a" stroke-width="1.6" stroke-linecap="round" stroke-linejoin="round" />
<path d="M703.5 595.5 V601 A2.2 2.2 0 0 0 705.7 603.2 H711.2" fill="none" stroke="#8a8a8a" stroke-width="1.6" stroke-linecap="round" stroke-linejoin="round" />
<rect x="689" y="610.8" width="19" height="1.6" rx="0" fill="#b8b8b8"/>
<rect x="691" y="615.8" width="13.5" height="10" rx="1.8" fill="none" stroke="#d35230" stroke-width="1.8"/>
<rect x="682" y="617.4" width="6.5" height="7" rx="2" fill="#d35230"/>
<rect x="707.5" y="617.4" width="6.5" height="7" rx="2" fill="#d35230"/>
<circle cx="1325.3" cy="636.5" r="4.5" fill="#c7dff5" stroke="none" stroke-width="0"/>
<path d="M685.3 697 A2.5 2.5 0 0 1 687.8 694.5 H703.5 L711.2 702.2 V727.3 A2.5 2.5 0 0 1 708.7 729.8 H687.8 A2.5 2.5 0 0 1 685.3 727.3 Z" fill="#fff" stroke="#8a8a8a" stroke-width="1.6" stroke-linecap="round" stroke-linejoin="round" />
<path d="M703.5 694.5 V700 A2.2 2.2 0 0 0 705.7 702.2 H711.2" fill="none" stroke="#8a8a8a" stroke-width="1.6" stroke-linecap="round" stroke-linejoin="round" />
<rect x="689" y="709.8" width="19" height="1.6" rx="0" fill="#b8b8b8"/>
<rect x="691" y="714.8" width="13.5" height="10" rx="1.8" fill="none" stroke="#d35230" stroke-width="1.8"/>
<rect x="682" y="716.4" width="6.5" height="7" rx="2" fill="#d35230"/>
<rect x="707.5" y="716.4" width="6.5" height="7" rx="2" fill="#d35230"/>
<circle cx="1325.3" cy="735.5" r="4.5" fill="#c7dff5" stroke="none" stroke-width="0"/>
<path d="M689.3 797 A2.5 2.5 0 0 1 691.8 794.5 H707 L714.8 802.3 V826.5 A2.5 2.5 0 0 1 712.3 829 H691.8 A2.5 2.5 0 0 1 689.3 826.5 Z" fill="#fff" stroke="#8a8a8a" stroke-width="1.6" stroke-linecap="round" stroke-linejoin="round" />
<path d="M707 794.5 V800 A2.3 2.3 0 0 0 709.3 802.3 H714.8" fill="none" stroke="#8a8a8a" stroke-width="1.6" stroke-linecap="round" stroke-linejoin="round" />
<rect x="702.5" y="808" width="3.5" height="2" rx="0" fill="#21a366"/>
<rect x="708.5" y="808" width="3.5" height="2" rx="0" fill="#21a366"/>
<rect x="702.5" y="812" width="3.5" height="2" rx="0" fill="#107c41"/>
<rect x="708.5" y="812" width="3.5" height="2" rx="0" fill="#107c41"/>
<rect x="702.5" y="816" width="3.5" height="2" rx="0" fill="#0b3d22"/>
<rect x="708.5" y="816" width="3.5" height="2" rx="0" fill="#0b3d22"/>
<rect x="680" y="803.8" width="20" height="20" rx="2.5" fill="#107c41"/>
<text x="690" y="819" font-family="Liberation Sans" font-size="15" font-weight="700" fill="#fff" text-anchor="middle">X</text>
<circle cx="1325.3" cy="834.5" r="4.5" fill="#c7dff5" stroke="none" stroke-width="0"/>
<path d="M689.3 896 A2.5 2.5 0 0 1 691.8 893.5 H707 L714.8 901.3 V925.5 A2.5 2.5 0 0 1 712.3 928 H691.8 A2.5 2.5 0 0 1 689.3 925.5 Z" fill="#fff" stroke="#8a8a8a" stroke-width="1.6" stroke-linecap="round" stroke-linejoin="round" />
<path d="M707 893.5 V899 A2.3 2.3 0 0 0 709.3 901.3 H714.8" fill="none" stroke="#8a8a8a" stroke-width="1.6" stroke-linecap="round" stroke-linejoin="round" />
<rect x="702.5" y="907" width="3.5" height="2" rx="0" fill="#21a366"/>
<rect x="708.5" y="907" width="3.5" height="2" rx="0" fill="#21a366"/>
<rect x="702.5" y="911" width="3.5" height="2" rx="0" fill="#107c41"/>
<rect x="708.5" y="911" width="3.5" height="2" rx="0" fill="#107c41"/>
<rect x="702.5" y="915" width="3.5" height="2" rx="0" fill="#0b3d22"/>
<rect x="708.5" y="915" width="3.5" height="2" rx="0" fill="#0b3d22"/>
<rect x="680" y="902.8" width="20" height="20" rx="2.5" fill="#107c41"/>
<text x="690" y="918" font-family="Liberation Sans" font-size="15" font-weight="700" fill="#fff" text-anchor="middle">X</text>
<circle cx="1325.3" cy="933.5" r="4.5" fill="#d6d6d6" stroke="none" stroke-width="0"/>
<path d="M689.3 995 A2.5 2.5 0 0 1 691.8 992.5 H707 L714.8 1000.3 V1024.5 A2.5 2.5 0 0 1 712.3 1027 H691.8 A2.5 2.5 0 0 1 689.3 1024.5 Z" fill="#fff" stroke="#8a8a8a" stroke-width="1.6" stroke-linecap="round" stroke-linejoin="round" />
<path d="M707 992.5 V998 A2.3 2.3 0 0 0 709.3 1000.3 H714.8" fill="none" stroke="#8a8a8a" stroke-width="1.6" stroke-linecap="round" stroke-linejoin="round" />
<rect x="702" y="1005.8000000000001" width="9.5" height="1.9" rx="0" fill="#41a5ee"/>
<rect x="702" y="1009.9" width="9.5" height="1.9" rx="0" fill="#2b7cd3"/>
<rect x="702" y="1013.9" width="9.5" height="1.9" rx="0" fill="#185abd"/>
<rect x="680" y="1001.8" width="20" height="20" rx="2.5" fill="#185abd"/>
<text x="690" y="1017.5" font-family="Liberation Sans" font-size="16" font-weight="400" fill="#fff" text-anchor="middle">W</text>
<circle cx="1325.3" cy="1032.5" r="4.5" fill="#d6d6d6" stroke="none" stroke-width="0"/>
<path d="M685.3 1093 A2.5 2.5 0 0 1 687.8 1090.5 H703.5 L711.2 1098.2 V1123.3 A2.5 2.5 0 0 1 708.7 1125.8 H687.8 A2.5 2.5 0 0 1 685.3 1123.3 Z" fill="#fff" stroke="#8a8a8a" stroke-width="1.6" stroke-linecap="round" stroke-linejoin="round" />
<path d="M703.5 1090.5 V1096 A2.2 2.2 0 0 0 705.7 1098.2 H711.2" fill="none" stroke="#8a8a8a" stroke-width="1.6" stroke-linecap="round" stroke-linejoin="round" />
<rect x="689" y="1105.8" width="19" height="1.6" rx="0" fill="#b8b8b8"/>
<rect x="691" y="1110.8" width="13.5" height="10" rx="1.8" fill="none" stroke="#d35230" stroke-width="1.8"/>
<rect x="682" y="1112.4" width="6.5" height="7" rx="2" fill="#d35230"/>
<rect x="707.5" y="1112.4" width="6.5" height="7" rx="2" fill="#d35230"/>
<circle cx="1325.3" cy="1131.5" r="4.5" fill="#c7dff5" stroke="none" stroke-width="0"/>
<path d="M689.3 1193 A2.5 2.5 0 0 1 691.8 1190.5 H707 L714.8 1198.3 V1222.5 A2.5 2.5 0 0 1 712.3 1225 H691.8 A2.5 2.5 0 0 1 689.3 1222.5 Z" fill="#fff" stroke="#8a8a8a" stroke-width="1.6" stroke-linecap="round" stroke-linejoin="round" />
<path d="M707 1190.5 V1196 A2.3 2.3 0 0 0 709.3 1198.3 H714.8" fill="none" stroke="#8a8a8a" stroke-width="1.6" stroke-linecap="round" stroke-linejoin="round" />
<rect x="702.5" y="1204" width="3.5" height="2" rx="0" fill="#21a366"/>
<rect x="708.5" y="1204" width="3.5" height="2" rx="0" fill="#21a366"/>
<rect x="702.5" y="1208" width="3.5" height="2" rx="0" fill="#107c41"/>
<rect x="708.5" y="1208" width="3.5" height="2" rx="0" fill="#107c41"/>
<rect x="702.5" y="1212" width="3.5" height="2" rx="0" fill="#0b3d22"/>
<rect x="708.5" y="1212" width="3.5" height="2" rx="0" fill="#0b3d22"/>
<rect x="680" y="1199.8" width="20" height="20" rx="2.5" fill="#107c41"/>
<text x="690" y="1215" font-family="Liberation Sans" font-size="15" font-weight="700" fill="#fff" text-anchor="middle">X</text>
<circle cx="1325.3" cy="1230.5" r="4.5" fill="#c7dff5" stroke="none" stroke-width="0"/>
<path d="M685.3 1291 A2.5 2.5 0 0 1 687.8 1288.5 H703.5 L711.2 1296.2 V1321.3 A2.5 2.5 0 0 1 708.7 1323.8 H687.8 A2.5 2.5 0 0 1 685.3 1321.3 Z" fill="#fff" stroke="#8a8a8a" stroke-width="1.6" stroke-linecap="round" stroke-linejoin="round" />
<path d="M703.5 1288.5 V1294 A2.2 2.2 0 0 0 705.7 1296.2 H711.2" fill="none" stroke="#8a8a8a" stroke-width="1.6" stroke-linecap="round" stroke-linejoin="round" />
<rect x="689" y="1303.8" width="19" height="1.6" rx="0" fill="#b8b8b8"/>
<rect x="691" y="1308.8" width="13.5" height="10" rx="1.8" fill="none" stroke="#d35230" stroke-width="1.8"/>
<rect x="682" y="1310.4" width="6.5" height="7" rx="2" fill="#d35230"/>
<rect x="707.5" y="1310.4" width="6.5" height="7" rx="2" fill="#d35230"/>
<circle cx="1325.3" cy="1329.5" r="4.5" fill="#c7dff5" stroke="none" stroke-width="0"/>
<path d="M685.3 1390 A2.5 2.5 0 0 1 687.8 1387.5 H703.5 L711.2 1395.2 V1420.3 A2.5 2.5 0 0 1 708.7 1422.8 H687.8 A2.5 2.5 0 0 1 685.3 1420.3 Z" fill="#fff" stroke="#8a8a8a" stroke-width="1.6" stroke-linecap="round" stroke-linejoin="round" />
<path d="M703.5 1387.5 V1393 A2.2 2.2 0 0 0 705.7 1395.2 H711.2" fill="none" stroke="#8a8a8a" stroke-width="1.6" stroke-linecap="round" stroke-linejoin="round" />
<rect x="689" y="1402.8" width="19" height="1.6" rx="0" fill="#b8b8b8"/>
<rect x="691" y="1407.8" width="13.5" height="10" rx="1.8" fill="none" stroke="#d35230" stroke-width="1.8"/>
<rect x="682" y="1409.4" width="6.5" height="7" rx="2" fill="#d35230"/>
<rect x="707.5" y="1409.4" width="6.5" height="7" rx="2" fill="#d35230"/>
<circle cx="1325.3" cy="1428.5" r="4.5" fill="#c7dff5" stroke="none" stroke-width="0"/>
<circle cx="2571" cy="308.8" r="10.3" fill="none" stroke="#0078d4" stroke-width="2.1"/>
<path d="M2563.8 316.2 L2551.2 328.8" fill="none" stroke="#0078d4" stroke-width="2.1" stroke-linecap="round" stroke-linejoin="round" />
<path d="M3042.5 303 L3065.5 326 M3065.5 303 L3042.5 326" fill="none" stroke="#242424" stroke-width="1.7" stroke-linecap="round" stroke-linejoin="round" />
</svg>
</body></html>
